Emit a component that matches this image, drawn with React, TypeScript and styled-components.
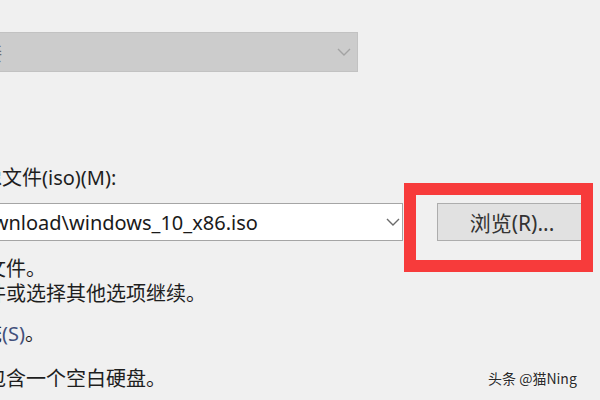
import React from "react";
import styled, { createGlobalStyle } from "styled-components";

const GlobalStyle = createGlobalStyle`
  html, body {
    margin: 0;
    padding: 0;
    background: #f0f0f0;
    overflow: hidden;
  }
  body {
    font-family: "Noto Sans", "Noto Sans CJK SC", sans-serif;
  }
`;

const FONT = `"Noto Sans", "Noto Sans CJK SC", sans-serif`;

const Page = styled.div`
  position: relative;
  width: 600px;
  height: 400px;
  overflow: hidden;
  background: #f0f0f0;
`;

// dialog body is wider than the photo, its left part is cut off
const Content = styled.div`
  display: flex;
  flex-direction: column;
  margin-left: -114px;
  padding-top: 32px;
  color: #1e1e1e;
  font-family: ${FONT};
  font-size: 20px;
`;

const Select = styled.div`
  box-sizing: border-box;
  width: 472px;
  height: 40px;
  display: flex;
  align-items: center;
  justify-content: space-between;
  padding: 0 6px 0 55px;
  background: #cccccc;
  border: 1px solid #c2c2c2;
  color: #6d6d6d;
`;

const Label = styled.div`
  margin-top: 94px;
  margin-left: -4px;
  height: 24px;
  line-height: 24px;
`;

const FileRow = styled.div`
  display: flex;
  align-items: center;
  gap: 34px;
  margin-top: 13px;
`;

const Input = styled.div`
  box-sizing: border-box;
  width: 517px;
  height: 38px;
  display: flex;
  align-items: center;
  justify-content: space-between;
  padding: 0 2px 0 52px;
  background: #fff;
  border: 1px solid #a5a5a5;
  color: #1a1a1a;
  white-space: nowrap;
`;

const Button = styled.div`
  box-sizing: border-box;
  width: 150px;
  height: 38px;
  display: flex;
  align-items: center;
  justify-content: center;
  background: #e1e1e1;
  border: 1px solid #adadad;
  color: #333;
  font-size: 21px;
`;

const Line = styled.div<{ gap?: number; indent?: number }>`
  margin-top: ${({ gap }) => gap ?? 0}px;
  margin-left: ${({ indent }) => indent ?? 0}px;
  height: 25px;
  line-height: 25px;
  white-space: nowrap;
`;

const Key = styled.span`
  color: #42507c;
`;

const Highlight = styled.div`
  position: absolute;
  left: 404px;
  top: 183px;
  width: 189px;
  height: 89px;
  box-sizing: border-box;
  border: 12px solid #f73b3b;
`;

const Watermark = styled.div`
  position: absolute;
  left: 488px;
  top: 368px;
  font-family: "Noto Sans CJK SC", sans-serif;
  font-size: 14px;
  color: #2a2a2a;
  text-shadow: 0 0 2px #fff;
`;

const Chevron: React.FC<{ color: string }> = ({ color }) => (
  <svg width="14" height="8" viewBox="0 0 14 8">
    <path d="M1 1 L7 7 L13 1" fill="none" stroke={color} strokeWidth="1.4" />
  </svg>
);

const App: React.FC = () => {
  return (
    <Page>
      <GlobalStyle />
      <Content>
        <Select>
          <span>未连接</span>
          <Chevron color="#a3a3a3" />
        </Select>
        <Label>可启动的映像文件(iso)(M):</Label>
        <FileRow>
          <Input>
            <span>D:\Download\windows_10_x86.iso</span>
            <Chevron color="#6b6b6b" />
          </Input>
          <Button>浏览(R)...</Button>
        </FileRow>
        <Line gap={15}>找不到映像文件。</Line>
        <Line>请浏览到文件或选择其他选项继续。</Line>
        <Line gap={15} indent={-4}>
          以后安装系统<Key>(S)</Key>。
        </Line>
        <Line gap={20}>此虚拟机将包含一个空白硬盘。</Line>
      </Content>
      <Highlight />
      <Watermark>头条 @猫Ning</Watermark>
    </Page>
  );
};

export default App;
